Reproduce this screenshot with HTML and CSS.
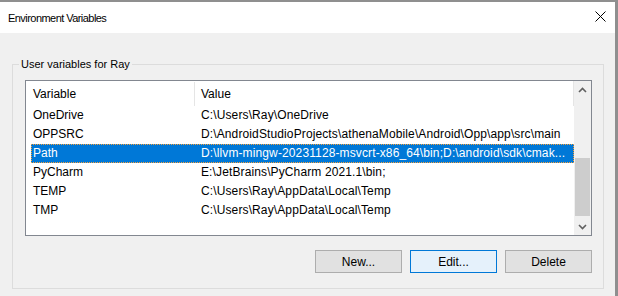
FILE: index.html
```html
<!DOCTYPE html>
<html>
<head>
<meta charset="utf-8">
<link rel="stylesheet" href="styles.css">
</head>
<body>
<div class="window">
  <div class="titlebar">
    <span class="title">Environment Variables</span>
    <svg class="close" width="11" height="11" viewBox="0 0 11 11"><path d="M0.5 0.5 L10.5 10.5 M10.5 0.5 L0.5 10.5" stroke="#000" stroke-width="1" fill="none"/></svg>
  </div>
  <div class="content">
    <fieldset class="group">
      <legend class="group-label">User variables for Ray</legend>
      <div class="listview">
        <div class="list-main">
          <div class="list-header">
            <div class="hcol hcol-var">Variable</div>
            <div class="hcol hcol-val">Value</div>
          </div>
          <div class="row"><div class="cell cell-var">OneDrive</div><div class="cell cell-val">C:\Users\Ray\OneDrive</div></div>
          <div class="row"><div class="cell cell-var">OPPSRC</div><div class="cell cell-val">D:\AndroidStudioProjects\athenaMobile\Android\Opp\app\src\main</div></div>
          <div class="row row-selected"><div class="cell cell-var">Path</div><div class="cell cell-val">D:\llvm-mingw-20231128-msvcrt-x86_64\bin;D:\android\sdk\cmak...</div></div>
          <div class="row"><div class="cell cell-var">PyCharm</div><div class="cell cell-val">E:\JetBrains\PyCharm 2021.1\bin;</div></div>
          <div class="row"><div class="cell cell-var">TEMP</div><div class="cell cell-val">C:\Users\Ray\AppData\Local\Temp</div></div>
          <div class="row"><div class="cell cell-var">TMP</div><div class="cell cell-val">C:\Users\Ray\AppData\Local\Temp</div></div>
        </div>
        <div class="scrollbar">
          <div class="sb-btn">
            <svg width="9" height="6" viewBox="0 0 9 6"><path d="M1 5 L4.5 1.5 L8 5" stroke="#606060" stroke-width="1.6" fill="none"/></svg>
          </div>
          <div class="sb-track"><div class="sb-thumb"></div></div>
          <div class="sb-btn">
            <svg width="9" height="6" viewBox="0 0 9 6"><path d="M1 1 L4.5 4.5 L8 1" stroke="#606060" stroke-width="1.6" fill="none"/></svg>
          </div>
        </div>
      </div>
      <div class="buttons">
        <button class="btn">New...</button>
        <button class="btn btn-focus">Edit...</button>
        <button class="btn">Delete</button>
      </div>
    </fieldset>
  </div>
</div>
</body>
</html>
```

FILE: styles.css
```css
* { box-sizing: border-box; }
html, body { margin: 0; padding: 0; background: #f0f0f0; }
body {
  font-family: "Liberation Sans", Arial, sans-serif;
  font-size: 12px;
  color: #000;
}
.window {
  width: 618px;
  height: 296px;
  border-top: 2px solid #8f8f8f;
  border-right: 3px solid #8f8f8f;
  background: #f0f0f0;
  overflow: hidden;
}
.titlebar {
  height: 31px;
  background: #fff;
  display: flex;
  align-items: center;
  justify-content: space-between;
  padding: 0 9px 0 8px;
}
.title { font-size: 11px; letter-spacing: -0.55px; }
.close { display: block; margin-top: -2px; }
.content {
  padding: 23px 11px 0 12px;
}
.group {
  margin: 0;
  min-width: 0;
  border: 1px solid #dcdcdc;
  padding: 8px 11px 15px 12px;
}
.group-label {
  font-size: 11px;
  line-height: 16px;
  padding: 0 2px;
  margin-left: -6px;
}
.listview {
  height: 156px;
  border: 1px solid #828790;
  background: #fff;
  display: flex;
}
.list-main {
  flex: 1;
  min-width: 0;
}
.list-header {
  height: 25px;
  display: flex;
  align-items: center;
  border-right: 1px solid #e5e5e5;
}
.hcol {
  height: 24px;
  line-height: 24px;
  margin-top: 1px;
  white-space: nowrap;
}
.hcol-var {
  width: 169px;
  padding-left: 7px;
  border-right: 1px solid #e5e5e5;
}
.hcol-val { padding-left: 6px; }
.row {
  height: 19px;
  line-height: 19px;
  display: flex;
  margin-left: 5px;
  white-space: nowrap;
}
.cell-var { width: 168px; padding-left: 2px; flex: none; }
.cell-val { padding-left: 2px; overflow: hidden; letter-spacing: 0.12px; }
.row-selected {
  background: #0078d7;
  color: #fff;
  outline: 1px dotted #f7a13b;
  outline-offset: -1px;
}
.scrollbar {
  width: 17px;
  flex: none;
  background: #f0f0f0;
  display: flex;
  flex-direction: column;
}
.sb-btn {
  height: 17px;
  display: flex;
  align-items: center;
  justify-content: center;
}
.sb-track {
  flex: 1;
  padding-top: 60px;
}
.sb-thumb {
  height: 58px;
  margin: 0 1px;
  background: #cdcdcd;
}
.buttons {
  margin-top: 14px;
  display: flex;
  justify-content: flex-end;
  gap: 8px;
}
.btn {
  width: 87px;
  height: 23px;
  background: #e1e1e1;
  border: 1px solid #adadad;
  font-family: "Liberation Sans", Arial, sans-serif;
  font-size: 12px;
  color: #000;
  padding: 0;
  margin: 0;
}
.btn-focus {
  background: #e5f1fb;
  border-color: #0078d7;
}
```
